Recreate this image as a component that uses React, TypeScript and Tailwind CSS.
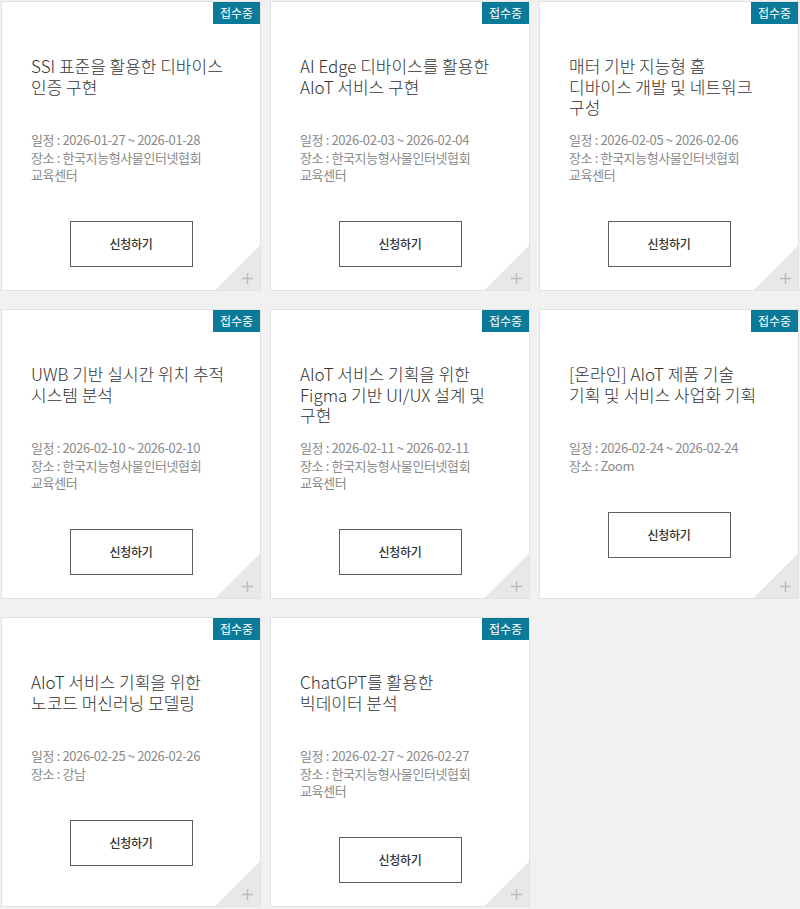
import React from "react";

type Item = {
  title: string[];
  date: string;
  place: string;
};

const items: Item[] = [
  { title: ["SSI 표준을 활용한 디바이스", "인증 구현"], date: "2026-01-27 ~ 2026-01-28", place: "한국지능형사물인터넷협회 교육센터" },
  { title: ["AI Edge 디바이스를 활용한", "AIoT 서비스 구현"], date: "2026-02-03 ~ 2026-02-04", place: "한국지능형사물인터넷협회 교육센터" },
  { title: ["매터 기반 지능형 홈", "디바이스 개발 및 네트워크", "구성"], date: "2026-02-05 ~ 2026-02-06", place: "한국지능형사물인터넷협회 교육센터" },
  { title: ["UWB 기반 실시간 위치 추적", "시스템 분석"], date: "2026-02-10 ~ 2026-02-10", place: "한국지능형사물인터넷협회 교육센터" },
  { title: ["AIoT 서비스 기획을 위한", "Figma 기반 UI/UX 설계 및", "구현"], date: "2026-02-11 ~ 2026-02-11", place: "한국지능형사물인터넷협회 교육센터" },
  { title: ["[온라인] AIoT 제품 기술", "기획 및 서비스 사업화 기획"], date: "2026-02-24 ~ 2026-02-24", place: "Zoom" },
  { title: ["AIoT 서비스 기획을 위한", "노코드 머신러닝 모델링"], date: "2026-02-25 ~ 2026-02-26", place: "강남" },
  { title: ["ChatGPT를 활용한", "빅데이터 분석"], date: "2026-02-27 ~ 2026-02-27", place: "한국지능형사물인터넷협회 교육센터" },
];

function Card({ item }: { item: Item }) {
  return (
    <div className="relative flex flex-col overflow-hidden border border-[#e3e3e3] bg-white px-[29px] pb-[23px] pt-[54px]">
      <span className="absolute right-0 top-0 flex h-[22px] w-[47px] items-center justify-center bg-[#0b7a99] text-[12px] leading-none text-white">
        접수중
      </span>
      <div className="h-[75px] text-[17px] font-light leading-[20.5px] text-[#333333]">
        {item.title.map((l, i) => (
          <span key={i} className="block whitespace-nowrap">
            {l}
          </span>
        ))}
      </div>
      <div className="w-[200px] break-keep text-[13px] leading-[17px] tracking-[-0.03em] text-[#8a8a8a]">
        <p>일정 : {item.date}</p>
        <p className="mt-[1px]">장소 : {item.place}</p>
      </div>
      <button className="mx-auto mt-[38px] flex h-[46px] w-[123px] items-center justify-center border border-[#5f5f5f] bg-white text-[12px] font-medium tracking-[-0.02em] text-[#333333]">
        신청하기
      </button>
      <div className="absolute bottom-0 right-0 h-[44px] w-[45px] bg-[linear-gradient(to_bottom_right,transparent_50%,#e8e8e8_50%)]" />
      <svg className="absolute bottom-[6px] right-[7px]" width="11" height="11" viewBox="0 0 11 11">
        <rect x="0" y="4.75" width="11" height="1.5" fill="#bdbdbd" />
        <rect x="4.75" y="0" width="1.5" height="11" fill="#bdbdbd" />
      </svg>
    </div>
  );
}

export default function App() {
  return (
    <div
      className="min-h-[909px] w-[800px] bg-[#f1f1f1] pl-[1px] pt-[1px]"
      style={{ fontFamily: '"Noto Sans CJK KR", "Noto Sans", sans-serif' }}
    >
      <div className="grid grid-cols-[260px_260px_260px] gap-x-[9px] gap-y-[18px]">
        {items.map((it, i) => (
          <Card key={i} item={it} />
        ))}
      </div>
    </div>
  );
}
